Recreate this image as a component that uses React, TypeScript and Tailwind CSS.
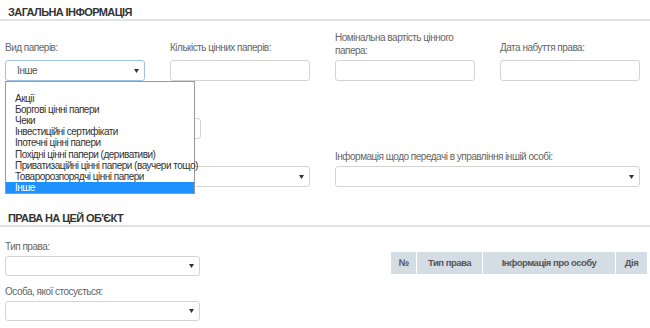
const font = { fontFamily: '"Liberation Sans", Arial, sans-serif' };

const options = [
  '',
  'Акції',
  'Боргові цінні папери',
  'Чеки',
  'Інвестиційні сертифікати',
  'Іпотечні цінні папери',
  'Похідні цінні папери (деривативи)',
  'Приватизаційні цінні папери (ваучери тощо)',
  'Товаророзпорядчі цінні папери',
  'Інше',
];

function Caret() {
  return (
    <svg width="5" height="4" viewBox="0 0 5 4" className="shrink-0">
      <path d="M0 0h5L2.5 4z" fill="#333" />
    </svg>
  );
}

function Label({ children, className = 'mb-[6px]' }: { children: React.ReactNode; className?: string }) {
  return (
    <div className={`text-[10px] leading-[13px] tracking-[-0.5px] text-[#666] ${className}`}>{children}</div>
  );
}

function Input({ className = '' }: { className?: string }) {
  return <div className={`h-[21px] rounded-[3px] border border-[#d4d4d4] bg-white ${className}`} />;
}

function Select({
  value,
  className = 'h-[21px]',
  focused,
}: {
  value?: string;
  className?: string;
  focused?: boolean;
}) {
  return (
    <div
      className={`rounded-[3px] border bg-white flex items-center justify-between pl-[11px] pr-[5px] text-[10px] tracking-[-0.4px] text-[#555] ${
        focused ? 'border-[#9fc3e6]' : 'border-[#d4d4d4]'
      } ${className}`}
    >
      <span>{value}</span>
      <Caret />
    </div>
  );
}

function SectionTitle({ children }: { children: React.ReactNode }) {
  return (
    <div className="border-b-2 border-[#e3e3e3] pl-[8px]">
      <h2 className="text-[11px] leading-[14px] font-bold uppercase tracking-[-0.6px] text-[#333]">{children}</h2>
    </div>
  );
}

export default function App() {
  return (
    <div className="w-[650px] h-[328px] overflow-hidden bg-white relative" style={font}>
      <div className="pt-[5px]">
        <SectionTitle>Загальна інформація</SectionTitle>
      </div>

      <div className="px-[5px]">
        {/* row 1 */}
        <div className="grid grid-cols-[140px_140px_140px_140px] gap-x-[25px] items-end mt-[10px]">
          <div className="relative">
            <Label>Вид паперів:</Label>
            <Select value="Інше" focused />
            {/* open option list */}
            <div className="absolute left-0 top-full w-[190px] border border-[#9a9a9a] bg-white z-10 text-[10px] leading-[11.1px] tracking-[-0.5px] text-[#333]">
              {options.map((o, i) => (
                <div
                  key={i}
                  className={`h-[11.1px] pl-[9px] whitespace-nowrap ${o === 'Інше' ? 'bg-[#1e90ff] text-white' : ''}`}
                >
                  {o}
                </div>
              ))}
            </div>
          </div>
          <div>
            <Label>Кількість цінних паперів:</Label>
            <Input />
          </div>
          <div>
            <Label className="mb-[3px]">
              Номінальна вартість цінного
              <br />
              папера:
            </Label>
            <Input />
          </div>
          <div>
            <Label>Дата набуття права:</Label>
            <Input />
          </div>
        </div>

        {/* row 2 */}
        <div className="mt-[37px] w-[196px]">
          <Input />
        </div>

        {/* row 3 */}
        <div className="grid grid-cols-[305px_305px] gap-x-[25px] mt-[11px]">
          <div>
            <Label className="mb-[3px]">&nbsp;</Label>
            <Select />
          </div>
          <div>
            <Label className="mb-[3px]">Інформація щодо передачі в управління іншій особі:</Label>
            <Select />
          </div>
        </div>
      </div>

      <div className="mt-[24px]">
        <SectionTitle>Права на цей об'єкт</SectionTitle>
      </div>

      <div className="flex px-[5px] mt-[13px]">
        <div className="w-[195px] shrink-0">
          <Label className="mb-[3px]">Тип права:</Label>
          <Select className="h-[20px]" />
          <div className="mt-[9px]">
            <Label className="mb-[3px]">Особа, якої стосується:</Label>
            <Select className="h-[20px]" />
          </div>
        </div>
        <div className="ml-[191px] mt-[12px]">
          <div className="flex h-[22px] w-[256px] bg-[#d5dde4] text-[9.5px] font-bold tracking-[-0.5px] text-[#555] items-center">
            <div className="w-[26px] h-full flex items-center justify-center border-r border-white">№</div>
            <div className="w-[66px] h-full flex items-center justify-center border-r border-white">Тип права</div>
            <div className="w-[133px] h-full flex items-center justify-center border-r border-white">
              Інформація про особу
            </div>
            <div className="flex-1 h-full flex items-center justify-center">Дія</div>
          </div>
        </div>
      </div>
    </div>
  );
}
